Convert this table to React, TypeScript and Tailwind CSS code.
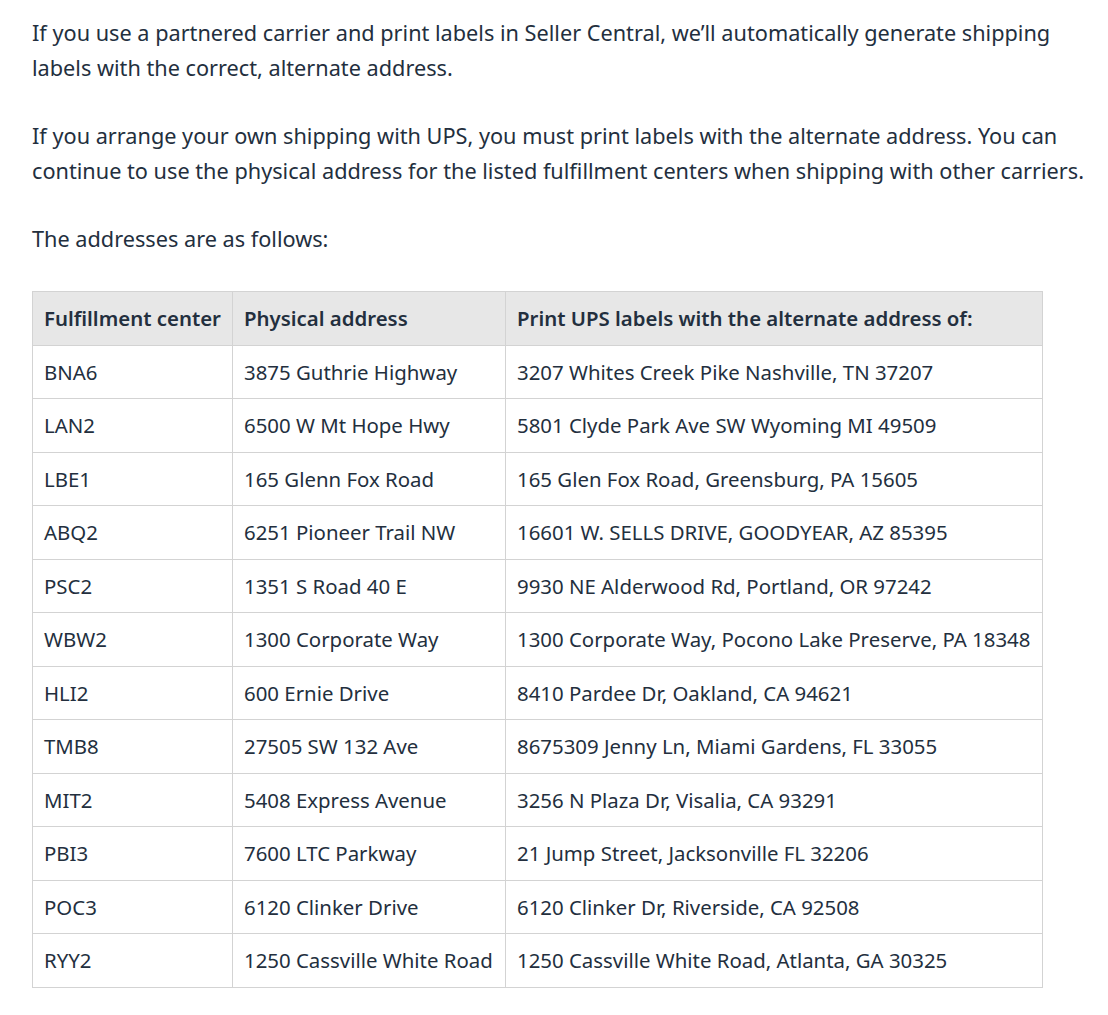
const rows: [string, string, string][] = [
  ['BNA6', '3875 Guthrie Highway', '3207 Whites Creek Pike Nashville, TN 37207'],
  ['LAN2', '6500 W Mt Hope Hwy', '5801 Clyde Park Ave SW Wyoming MI 49509'],
  ['LBE1', '165 Glenn Fox Road', '165 Glen Fox Road, Greensburg, PA 15605'],
  ['ABQ2', '6251 Pioneer Trail NW', '16601 W. SELLS DRIVE, GOODYEAR, AZ 85395'],
  ['PSC2', '1351 S Road 40 E', '9930 NE Alderwood Rd, Portland, OR 97242'],
  ['WBW2', '1300 Corporate Way', '1300 Corporate Way, Pocono Lake Preserve, PA 18348'],
  ['HLI2', '600 Ernie Drive', '8410 Pardee Dr, Oakland, CA 94621'],
  ['TMB8', '27505 SW 132 Ave', '8675309 Jenny Ln, Miami Gardens, FL 33055'],
  ['MIT2', '5408 Express Avenue', '3256 N Plaza Dr, Visalia, CA 93291'],
  ['PBI3', '7600 LTC Parkway', '21 Jump Street, Jacksonville FL 32206'],
  ['POC3', '6120 Clinker Drive', '6120 Clinker Dr, Riverside, CA 92508'],
  ['RYY2', '1250 Cassville White Road', '1250 Cassville White Road, Atlanta, GA 30325'],
];

export default function App() {
  return (
    <div className="min-h-screen bg-white px-8 pt-[15px] text-[#232f3e] font-['Noto_Sans',sans-serif]">
      {/* intro copy */}
      <div className="flex flex-col gap-[33px] text-[21.7px] leading-[35px] whitespace-nowrap">
        <p>
          If you use a partnered carrier and print labels in Seller Central, we’ll automatically generate shipping
          <br />
          labels with the correct, alternate address.
        </p>
        <p>
          If you arrange your own shipping with UPS, you must print labels with the alternate address. You can
          <br />
          continue to use the physical address for the listed fulfillment centers when shipping with other carriers.
        </p>
        <p>The addresses are as follows:</p>
      </div>

      {/* address table */}
      <table className="mt-[35px] border-collapse text-[20.4px] leading-[28.5px]">
        <thead>
          <tr className="bg-[#e7e7e7]">
            <th className="w-[200px] border border-[#d3d3d3] px-[11px] py-3 text-left font-semibold whitespace-nowrap">Fulfillment center</th>
            <th className="w-[273px] border border-[#d3d3d3] px-[11px] py-3 text-left font-semibold">Physical address</th>
            <th className="w-[537px] border border-[#d3d3d3] px-[11px] py-3 text-left font-semibold">
              Print UPS labels with the alternate address of:
            </th>
          </tr>
        </thead>
        <tbody>
          {rows.map(([fc, phys, alt]) => (
            <tr key={fc}>
              <td className="border border-[#d3d3d3] px-[11px] py-3">{fc}</td>
              <td className="border border-[#d3d3d3] px-[11px] py-3 whitespace-nowrap">{phys}</td>
              <td className="border border-[#d3d3d3] px-[11px] py-3 whitespace-nowrap">{alt}</td>
            </tr>
          ))}
        </tbody>
      </table>
    </div>
  );
}
